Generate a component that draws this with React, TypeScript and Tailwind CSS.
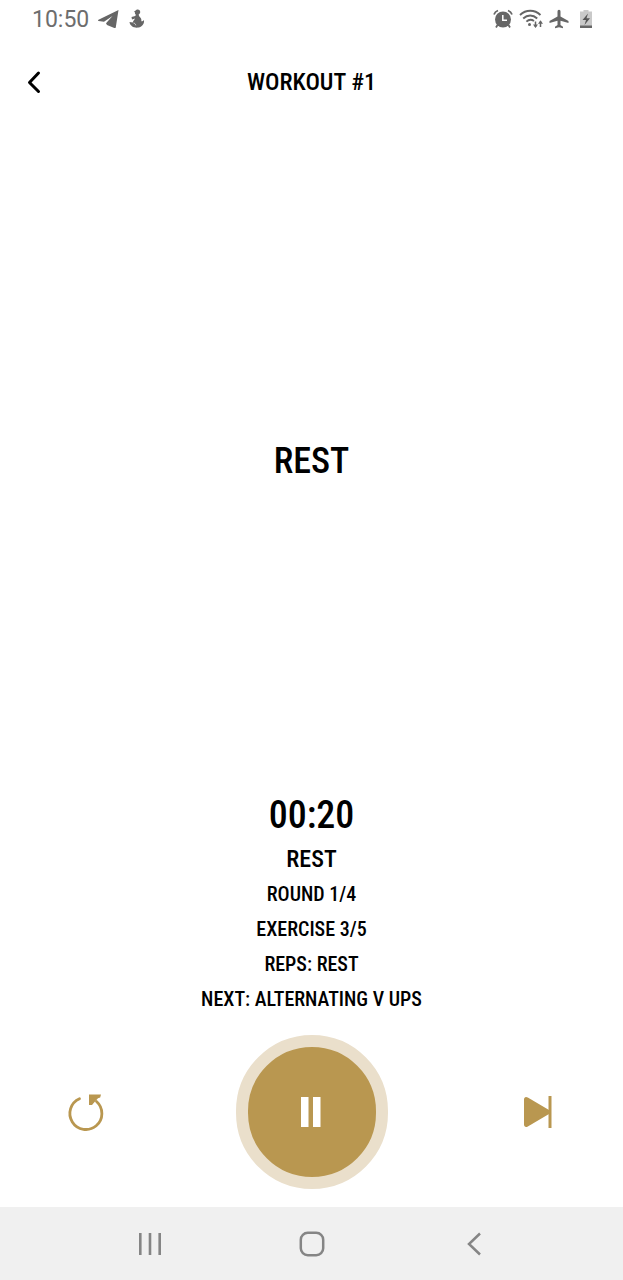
import React from "react";

const details = ["Round 1/4", "Exercise 3/5", "Reps: Rest", "Next: Alternating V Ups"];

function StatusBar() {
  return (
    <div className="flex h-10 shrink-0 items-center justify-between pr-[30px] pb-0.5 pl-8 text-[#666666]">
      <div className="flex items-center gap-[9px]">
        <span className="font-['Roboto',sans-serif] text-[23px] leading-none text-[#6d6d6d]">10:50</span>
        <svg className="h-5 w-[22px]" viewBox="0 0 22 20" fill="currentColor" aria-hidden="true">
          <path d="M20.500 1 .5 10.800c-.7.400-.6 1 .1 1.200l5.400.800L14.500 7 8 14.200l1 1.800 7.300 2.900c.8.400 1.300.1 1.500-.7Z" />
        </svg>
        <svg className="h-5 w-4" viewBox="0 0 16 20" fill="currentColor" aria-hidden="true">
          <path d="M7.500.8c2-.8 3.900.5 3.700 2.400-.1 1-.7 1.700-1.500 2.200.1 1 .4 1.700 1.200 2.600 1.300 1.300 1.800 2.800 1.400 4.300 1.100.1 2-.4 2.700-1.300.4 2.700-.7 5-2.900 6.500C9.500 19.200 5.200 19 3 17.200c-1.400-1-2.300-2.400-2.500-4.200l3.200.6c.4-1.500 1.500-2.600 2.400-4L3 10.500 2.500 8l3.700-1.100c.5-.5.7-1 .5-1.500C5.900 5 5.800 4 6.100 3.300L4.800 2.900Z" />
          <path d="M4.500 14c1.300.2 2 1 2.300 2.300" fill="none" stroke="#fff" strokeWidth=".7" />
        </svg>
      </div>
      <div className="flex items-center gap-1.5">
        <svg className="h-5 w-5" viewBox="0 0 20 20" fill="none" stroke="currentColor" strokeWidth="1.800" aria-hidden="true">
          <circle cx="10" cy="10.500" r="8" fill="currentColor" stroke="none" />
          <path d="M1 5.500c.7-2 1.900-3.200 4-4M19 5.500c-.7-2-1.900-3.200-4-4M4.500 16 3 18.500M15.500 16l1.500 2.500" />
          <path d="M9.800 6v5.200H14" stroke="#fff" strokeWidth="1.500" />
        </svg>
        <svg className="h-5 w-6" viewBox="0 0 24 20" fill="none" stroke="currentColor" strokeWidth="1.900" aria-hidden="true">
          <path d="M1 6c6-5.600 14.500-5.600 20.500 0M4.200 9.500c4.200-4 9.800-4 14 0M7.400 12.700c2.200-2.200 5.200-2.400 7.600-.7" />
          <circle cx="10.500" cy="15.500" r="1.500" fill="currentColor" stroke="none" />
          <path d="M16.500 12.500V18M21.500 18v-5.500" strokeWidth="1.500" />
          <path d="m14 15.500 2.500 3.500 2.500-3.500ZM19 14.800l2.500-3.500 2.500 3.500Z" fill="currentColor" stroke="none" />
        </svg>
        <svg className="h-5 w-5" viewBox="0 0 20 20" fill="currentColor" aria-hidden="true">
          <path d="M10 .8c1 0 1.500.9 1.500 2v4.700L19.500 12v2l-8-2.200v4.300l2.500 1.700v1.500l-4-1-4 1v-1.500l2.500-1.700v-4.300l-8 2.200v-2l8-4.500V2.800c0-1.100.5-2 1.500-2Z" />
        </svg>
        <svg className="ml-1 h-5 w-3.5" viewBox="0 0 14 20" aria-hidden="true">
          <path d="M4.500 1h5v1.500H13V19H1V2.500h3.500Z" fill="#c9c9c9" />
          <path d="M1 16.500h12V19H1Z" fill="#666" />
          <path d="M9 4.500 3.500 11H7l-1.500 5L11 9.300H7.500Z" fill="#555" />
        </svg>
      </div>
    </div>
  );
}

export default function App() {
  return (
    <div className="flex min-h-screen flex-col bg-white font-['Roboto_Condensed','Liberation_Sans_Narrow','Roboto',sans-serif] text-black">
      <StatusBar />
      <header className="grid h-[84px] shrink-0 grid-cols-[1fr_auto_1fr] items-center px-5">
        <button type="button" aria-label="Back" className="flex h-10 w-7 items-center justify-center">
          <svg className="h-6 w-4" viewBox="0 0 16 24" fill="none" stroke="currentColor" strokeWidth="3" strokeLinecap="round" strokeLinejoin="round" aria-hidden="true">
            <path d="M12.500 3 3.500 12.500l9 9" />
          </svg>
        </button>
        <h1 className="text-[24px] leading-none font-medium uppercase">Workout #1</h1>
      </header>

      <main className="flex grow flex-col">
        <div className="flex grow items-center justify-center pt-2">
          <h2 className="text-[36px] leading-none font-medium uppercase">Rest</h2>
        </div>

        <section className="flex flex-col items-center text-center uppercase">
          <p className="text-[38px] leading-[52px] font-medium">00:20</p>
          <p className="text-[24px] leading-9 font-medium">Rest</p>
          {details.map((line) => (
            <p key={line} className="text-[20px] leading-[35px] font-medium">{line}</p>
          ))}
        </section>

        <div className="flex items-center justify-between px-[66px] py-[18px] text-[#b99750]">
          <button type="button" aria-label="Restart" className="flex h-10 w-10 items-center justify-center">
            <svg className="h-10 w-10" viewBox="0 0 40 40" fill="none" stroke="currentColor" strokeWidth="2.800" aria-hidden="true">
              <path d="M13.500 6.800A16 16 0 1 0 30.500 9.500" strokeLinecap="round" />
              <path d="M23 2.500h12l-.8 3-2.200.7L29 9.500 26 13h-3Z" fill="currentColor" stroke="none" />
            </svg>
          </button>
          <button type="button" aria-label="Pause" className="flex h-[154px] w-[152px] items-center justify-center rounded-full border-12 border-[#eadfcb] bg-[#b99750]">
            <svg className="mr-0.5 h-[30px] w-5" viewBox="0 0 20 30" fill="#fff" aria-hidden="true">
              <path d="M0 0h7.500v30H0ZM12 0h7.500v30H12Z" />
            </svg>
          </button>
          <button type="button" aria-label="Skip" className="flex h-10 w-10 items-center justify-center">
            <svg className="h-8 w-[30px]" viewBox="0 0 30 32" fill="currentColor" aria-hidden="true">
              <path d="M2 3.500C2 1.200 3.800.3 5.800 1.500L27 14v4L5.800 30.500C3.800 31.700 2 30.800 2 28.500Z" />
              <path d="M26.500 0H29.500v32H26.500Z" />
            </svg>
          </button>
        </div>
      </main>

      <nav className="flex h-[73px] shrink-0 items-center justify-between bg-[#f0f0f0] px-[134px] text-[#858585]">
        <button type="button" aria-label="Recent apps" className="flex h-10 w-8 items-center justify-center">
          <svg className="h-6 w-6" viewBox="0 0 24 24" fill="none" stroke="currentColor" strokeWidth="2.600" aria-hidden="true">
            <path d="M2.300 1v22M12 1v22M21.700 1v22" />
          </svg>
        </button>
        <button type="button" aria-label="Home" className="flex h-10 w-8 items-center justify-center">
          <svg className="h-[26px] w-[26px]" viewBox="0 0 26 26" fill="none" stroke="currentColor" strokeWidth="2.500" aria-hidden="true">
            <rect x="1.800" y="1.800" width="22.400" height="22.400" rx="7" />
          </svg>
        </button>
        <button type="button" aria-label="Go back" className="flex h-10 w-8 items-center justify-center">
          <svg className="h-6 w-4" viewBox="0 0 16 24" fill="none" stroke="currentColor" strokeWidth="2.500" aria-hidden="true">
            <path d="M15 1.500 4 12l11 10.500" />
          </svg>
        </button>
      </nav>
    </div>
  );
}
